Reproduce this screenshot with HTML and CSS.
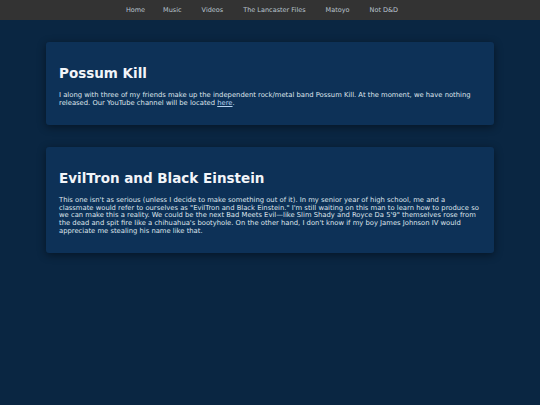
FILE: index.html
```html
<!DOCTYPE html>
<html lang="en">
<head>
<meta charset="utf-8">
<title>Projects</title>
<link rel="stylesheet" href="styles.css">
</head>
<body>
<nav class="topnav">
  <a href="#">Home</a>
  <a href="#">Music</a>
  <a href="#">Videos</a>
  <a href="#">The Lancaster Files</a>
  <a href="#">Matoyo</a>
  <a href="#">Not D&amp;D</a>
</nav>
<main class="content">
  <section class="card">
    <h2>Possum Kill</h2>
    <p>I along with three of my friends make up the independent rock/metal band Possum Kill. At the moment, we have nothing released. Our YouTube channel will be located <a href="#">here</a>.</p>
  </section>
  <section class="card">
    <h2>EvilTron and Black Einstein</h2>
    <p>This one isn't as serious (unless I decide to make something out of it). In my senior year of high school, me and a classmate would refer to ourselves as "EvilTron and Black Einstein." I'm still waiting on this man to learn how to produce so we can make this a reality. We could be the next Bad Meets Evil—like Slim Shady and Royce Da 5'9" themselves rose from the dead and spit fire like a chihuahua's bootyhole. On the other hand, I don't know if my boy James Johnson IV would appreciate me stealing his name like that.</p>
  </section>
</main>
</body>
</html>
```

FILE: styles.css
```css
* { box-sizing: border-box; }
html, body { height: 100%; }
body {
  margin: 0;
  background: #0a2642;
  font-family: "DejaVu Sans", Verdana, sans-serif;
  color: #dfe5ec;
}
.topnav {
  height: 20px;
  background: #333333;
  display: flex;
  justify-content: center;
  align-items: center;
  padding-right: 16px;
}
.topnav a {
  color: #b9c4cf;
  text-decoration: none;
  font-size: 6.5px;
  padding: 0 10px;
}
.topnav a:first-child {
  padding-right: 8px;
}
.content {
  padding: 22px 46px;
  display: flex;
  flex-direction: column;
  gap: 22px;
}
.card {
  background: #0d3157;
  border-radius: 3px;
  padding: 22px 13px 18px;
  box-shadow: 0 2px 8px rgba(0, 0, 0, 0.45);
}
.card h2 {
  margin: 0 0 10px;
  font-size: 13.5px;
  font-weight: bold;
  color: #f2f5f9;
  line-height: 18px;
}
.card p {
  margin: 0;
  font-size: 6.8px;
  line-height: 7.6px;
}
.card p a {
  color: #b6d3f0;
  text-decoration: underline;
}
```
